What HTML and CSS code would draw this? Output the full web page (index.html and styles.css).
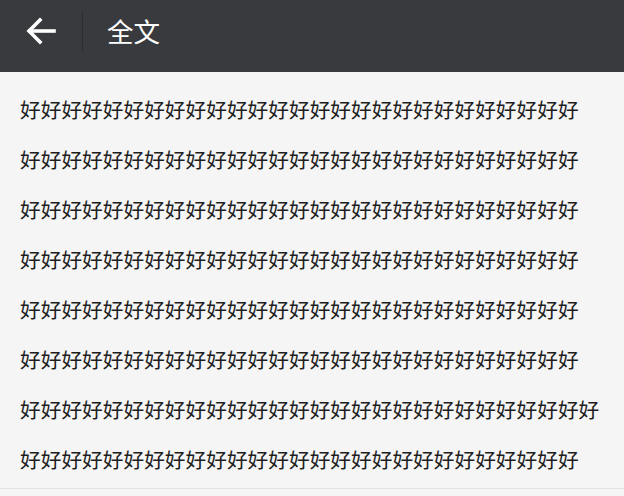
FILE: index.html
```html
<!DOCTYPE html>
<html lang="zh-CN">
<head>
    <meta charset="UTF-8">
    <meta name="viewport" content="width=device-width, initial-scale=1.0">
    <title>全文</title>
    <link rel="stylesheet" href="styles.css">
</head>
<body>
    <header class="topbar">
        <button class="back-btn" aria-label="返回">
            <svg xmlns="http://www.w3.org/2000/svg" width="32" height="30" viewBox="0 0 32 30" fill="none" stroke="currentColor" stroke-width="3.6" stroke-linecap="square">
                <path d="M29 15H5"/>
                <path d="M15 4L4 15l11 11"/>
            </svg>
        </button>
        <span class="divider"></span>
        <h1>全文</h1>
    </header>

    <div class="content">
        <p>好好好好好好好好好好好好好好好好好好好好好好好好好好好</p>
        <p>好好好好好好好好好好好好好好好好好好好好好好好好好好好</p>
        <p>好好好好好好好好好好好好好好好好好好好好好好好好好好好</p>
        <p>好好好好好好好好好好好好好好好好好好好好好好好好好好好</p>
        <p>好好好好好好好好好好好好好好好好好好好好好好好好好好好</p>
        <p>好好好好好好好好好好好好好好好好好好好好好好好好好好好</p>
        <p>好好好好好好好好好好好好好好好好好好好好好好好好好好好好</p>
        <p>好好好好好好好好好好好好好好好好好好好好好好好好好好好</p>
    </div>
</body>
</html>
```

FILE: styles.css
```css
* {
    margin: 0;
    padding: 0;
    box-sizing: border-box;
    font-family: "Noto Sans CJK SC", "Noto Sans", sans-serif;
}

body {
    background-color: #f5f5f5;
    color: #1e1e1e;
    overflow: hidden;
}

.topbar {
    height: 72px;
    background-color: #393a3d;
    color: #ffffff;
    display: flex;
    align-items: center;
    padding-bottom: 10px;
}

.back-btn {
    width: 82px;
    height: 42px;
    background: none;
    border: none;
    color: #ffffff;
    display: flex;
    align-items: center;
    padding-left: 25px;
    cursor: pointer;
}

.divider {
    width: 1px;
    height: 40px;
    background-color: #2c2d2f;
}

.topbar h1 {
    font-size: 26.5px;
    font-weight: 400;
    margin-left: 24px;
    line-height: 1;
}

.content {
    padding: 12px 0 4px 20px;
    border-bottom: 1px solid #e2e2e2;
}

.content p {
    font-size: 20.7px;
    line-height: 50px;
    white-space: nowrap;
}
```
